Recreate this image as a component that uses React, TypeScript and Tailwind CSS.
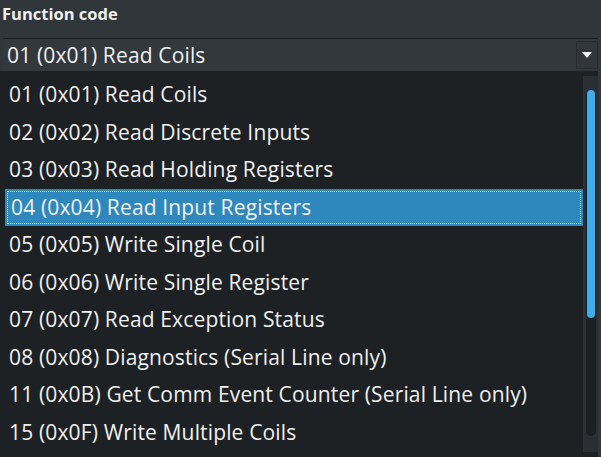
import React from "react";

const items = [
  "01 (0x01) Read Coils",
  "02 (0x02) Read Discrete Inputs",
  "03 (0x03) Read Holding Registers",
  "04 (0x04) Read Input Registers",
  "05 (0x05) Write Single Coil",
  "06 (0x06) Write Single Register",
  "07 (0x07) Read Exception Status",
  "08 (0x08) Diagnostics (Serial Line only)",
  "11 (0x0B) Get Comm Event Counter (Serial Line only)",
  "15 (0x0F) Write Multiple Coils",
];

export default function App() {
  return (
    <div className="relative w-[601px] h-[457px] overflow-hidden bg-[#31363b] font-['Open_Sans',sans-serif] text-[#eff0f1]">
      <div className="h-[38px] pl-[2px] pt-[2px] text-[16.5px] font-bold leading-[24px]">Function code</div>
      <div className="ml-[3px] mr-[3px] h-[33px] border-t border-[#1b1e20] bg-[#33383d] flex items-center">
        <div className="flex-1 pl-[4px] text-[21px] leading-[26px] tracking-[0.15px]">01 (0x01) Read Coils</div>
        <div className="w-[22px] h-[28px] border border-[#272b2f] bg-[#31363b] flex items-center justify-center">
          <svg width="10" height="7" viewBox="0 0 10 7">
            <polygon points="0,0 10,0 5,6" fill="#eff0f1" />
          </svg>
        </div>
      </div>
      <div className="absolute left-0 top-[71px] w-[598px] bottom-0 bg-[#1e2124] flex">
        <div className="flex-1 pt-[5px] pl-[5px] flex flex-col">
          {items.map((t, i) => (
            <div
              key={t}
              className={
                i === 3
                  ? "h-[37.5px] shrink-0 flex items-center bg-[#2f88bd] pl-[6px] outline-dotted outline-1 outline-offset-[-3px] outline-[#e6eef3] text-[21px] tracking-[0.15px] whitespace-nowrap"
                  : "h-[37.5px] shrink-0 flex items-center pl-[4px] text-[21px] tracking-[0.15px] whitespace-nowrap"
              }
            >
              {t}
            </div>
          ))}
        </div>
        <div className="w-[15px] mt-[5px] mb-[5px] bg-[#2b2f33] flex justify-center pt-[14px] pb-[16px]">
          <div className="w-[10px] h-full rounded-full bg-[#1d2023] flex flex-col items-center">
            <div className="w-[8px] h-[228px] rounded-full bg-[#3daee9]" />
          </div>
        </div>
      </div>
    </div>
  );
}
